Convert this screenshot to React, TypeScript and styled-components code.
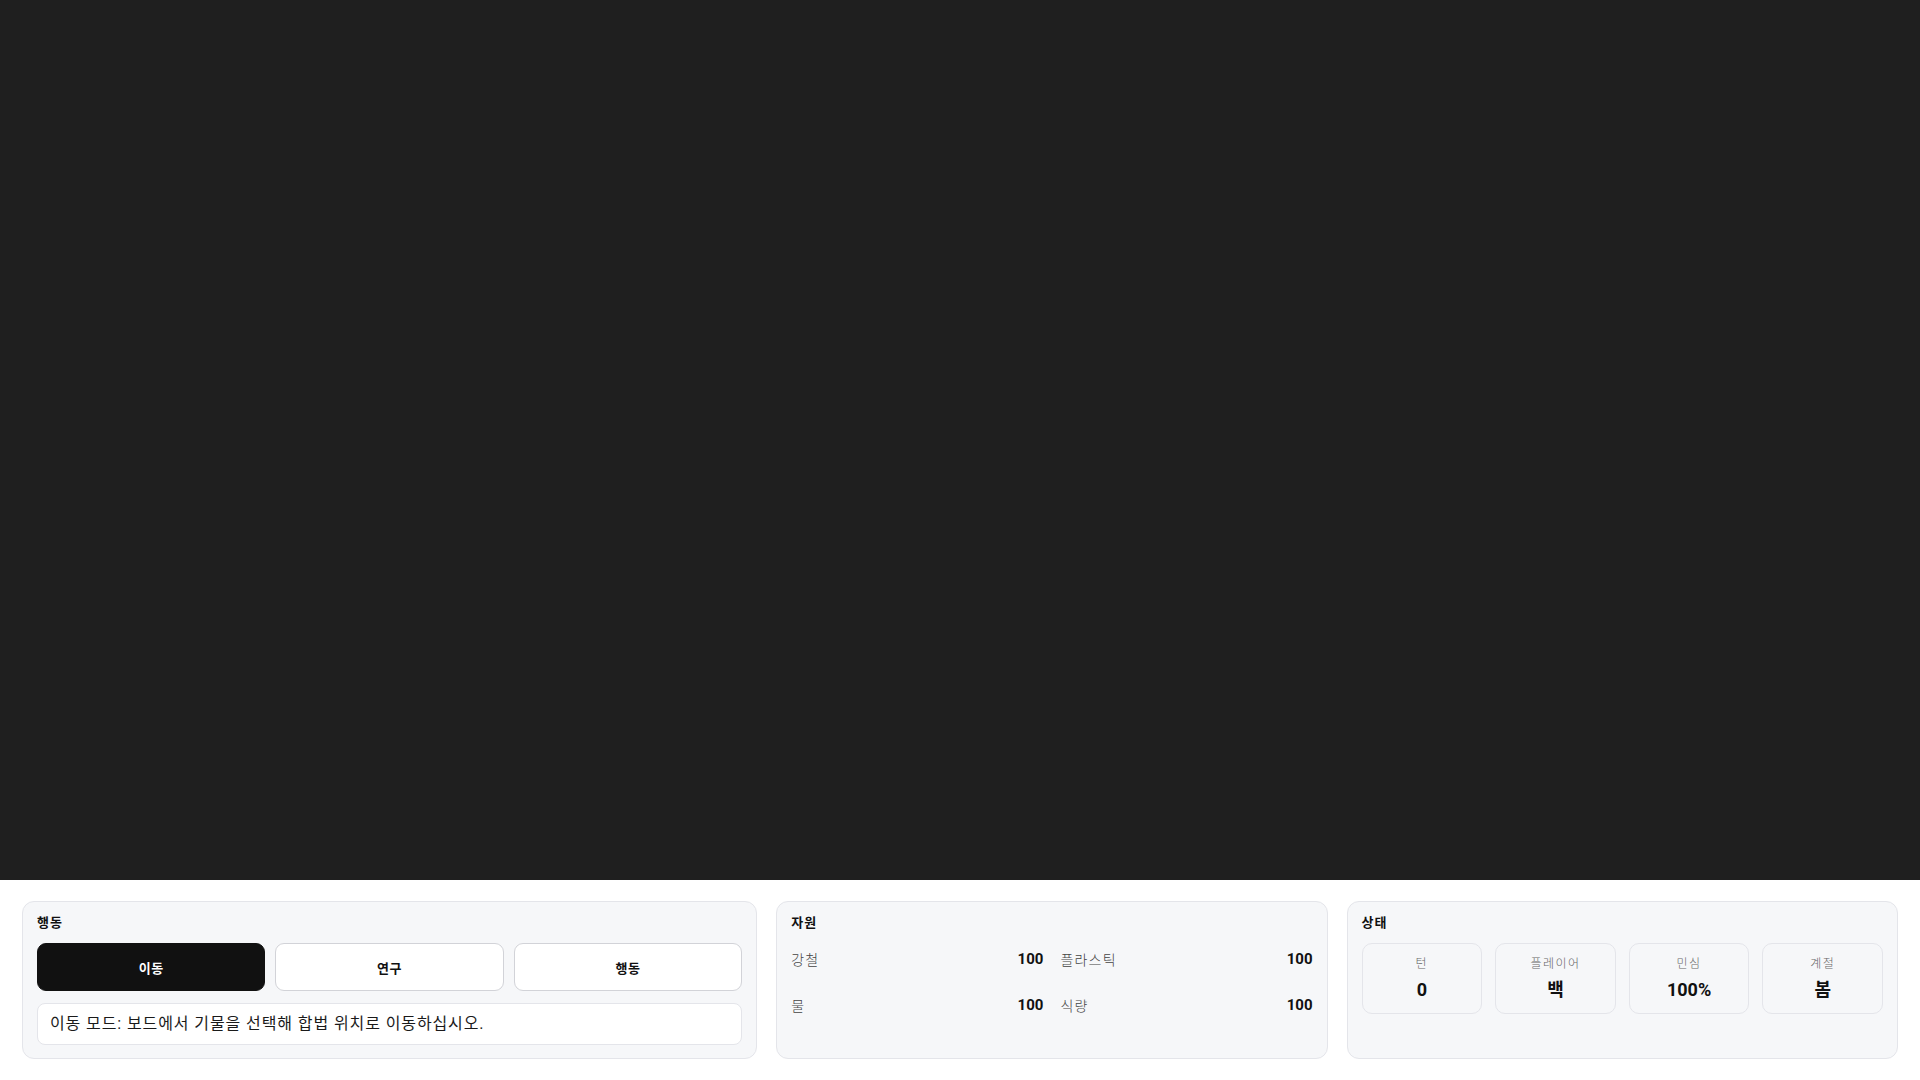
import React from "react";
import styled, { createGlobalStyle } from "styled-components";

const GlobalStyle = createGlobalStyle`
  html, body {
    margin: 0;
    padding: 0;
    background: #ffffff;
    font-family: Roboto, "Noto Sans CJK KR", "Noto Sans", sans-serif;
    color: #111111;
  }
  * {
    box-sizing: border-box;
  }
`;

const Page = styled.div`
  height: 100vh;
  display: flex;
  flex-direction: column;
`;

const Board = styled.div`
  flex: 1;
  background-color: #1f1f1f;
`;

const Dock = styled.div`
  display: grid;
  grid-template-columns: 4fr 3fr 3fr;
  gap: 19px;
  padding: 21px 22px;
  background-color: #ffffff;
`;

const Panel = styled.section`
  display: flex;
  flex-direction: column;
  gap: 12px;
  padding: 13px 14px;
  background-color: #f6f7f9;
  border: 1px solid #e4e5ea;
  border-radius: 12px;
`;

const PanelTitle = styled.h3`
  margin: 0;
  font-size: 13px;
  line-height: 16px;
  font-weight: 700;
  letter-spacing: 1px;
  color: #111111;
`;

const ModeRow = styled.div`
  display: grid;
  grid-template-columns: repeat(3, 1fr);
  gap: 10px;
`;

const ModeButton = styled.button<{ $active?: boolean }>`
  height: 48px;
  border-radius: 9px;
  border: 1px solid ${(p) => (p.$active ? "#111111" : "#d2d3d8")};
  background-color: ${(p) => (p.$active ? "#111111" : "#ffffff")};
  color: ${(p) => (p.$active ? "#ffffff" : "#111111")};
  font-family: inherit;
  font-size: 13px;
  font-weight: 700;
  letter-spacing: 0.6px;
  cursor: pointer;
`;

const Hint = styled.div`
  padding: 10px 12px;
  font-size: 16px;
  line-height: 20px;
  font-weight: 400;
  letter-spacing: 0.9px;
  color: #1a1a1a;
  background-color: #ffffff;
  border: 1px solid #e4e5ea;
  border-radius: 8px;
`;

const ResourceGrid = styled.div`
  display: grid;
  grid-template-columns: 1fr 1fr;
  column-gap: 17px;
  row-gap: 14px;
`;

const ResourceRow = styled.div`
  display: flex;
  align-items: center;
  justify-content: space-between;
  height: 32px;
`;

const ResourceName = styled.span`
  font-size: 14px;
  font-weight: 300;
  letter-spacing: 1.2px;
  color: #444444;
`;

const ResourceValue = styled.span`
  font-size: 15px;
  font-weight: 700;
  color: #111111;
`;

const StatGrid = styled.div`
  display: grid;
  grid-template-columns: repeat(4, 1fr);
  gap: 13px;
`;

const StatCard = styled.div`
  display: flex;
  flex-direction: column;
  align-items: center;
  gap: 7px;
  padding: 12px 8px 12px;
  border: 1px solid #e4e5ea;
  border-radius: 10px;
  background-color: #f6f7f9;
`;

const StatLabel = styled.span`
  font-size: 12px;
  line-height: 16px;
  font-weight: 300;
  letter-spacing: 1.5px;
  color: #666666;
`;

const StatValue = styled.span`
  font-size: 18px;
  line-height: 22px;
  font-weight: 700;
  color: #111111;
`;

const modes = [
  { label: "이동", active: true },
  { label: "연구", active: false },
  { label: "행동", active: false },
];

const resources = [
  { name: "강철", value: 100 },
  { name: "플라스틱", value: 100 },
  { name: "물", value: 100 },
  { name: "식량", value: 100 },
];

const stats = [
  { label: "턴", value: "0" },
  { label: "플레이어", value: "백" },
  { label: "민심", value: "100%" },
  { label: "계절", value: "봄" },
];

export default function App() {
  return (
    <>
      <GlobalStyle />
      <Page>
        <Board />
        <Dock>
          <Panel>
            <PanelTitle>행동</PanelTitle>
            <ModeRow>
              {modes.map((m) => (
                <ModeButton key={m.label} $active={m.active}>
                  {m.label}
                </ModeButton>
              ))}
            </ModeRow>
            <Hint>이동 모드: 보드에서 기물을 선택해 합법 위치로 이동하십시오.</Hint>
          </Panel>

          <Panel>
            <PanelTitle>자원</PanelTitle>
            <ResourceGrid>
              {resources.map((r) => (
                <ResourceRow key={r.name}>
                  <ResourceName>{r.name}</ResourceName>
                  <ResourceValue>{r.value}</ResourceValue>
                </ResourceRow>
              ))}
            </ResourceGrid>
          </Panel>

          <Panel>
            <PanelTitle>상태</PanelTitle>
            <StatGrid>
              {stats.map((s) => (
                <StatCard key={s.label}>
                  <StatLabel>{s.label}</StatLabel>
                  <StatValue>{s.value}</StatValue>
                </StatCard>
              ))}
            </StatGrid>
          </Panel>
        </Dock>
      </Page>
    </>
  );
}
